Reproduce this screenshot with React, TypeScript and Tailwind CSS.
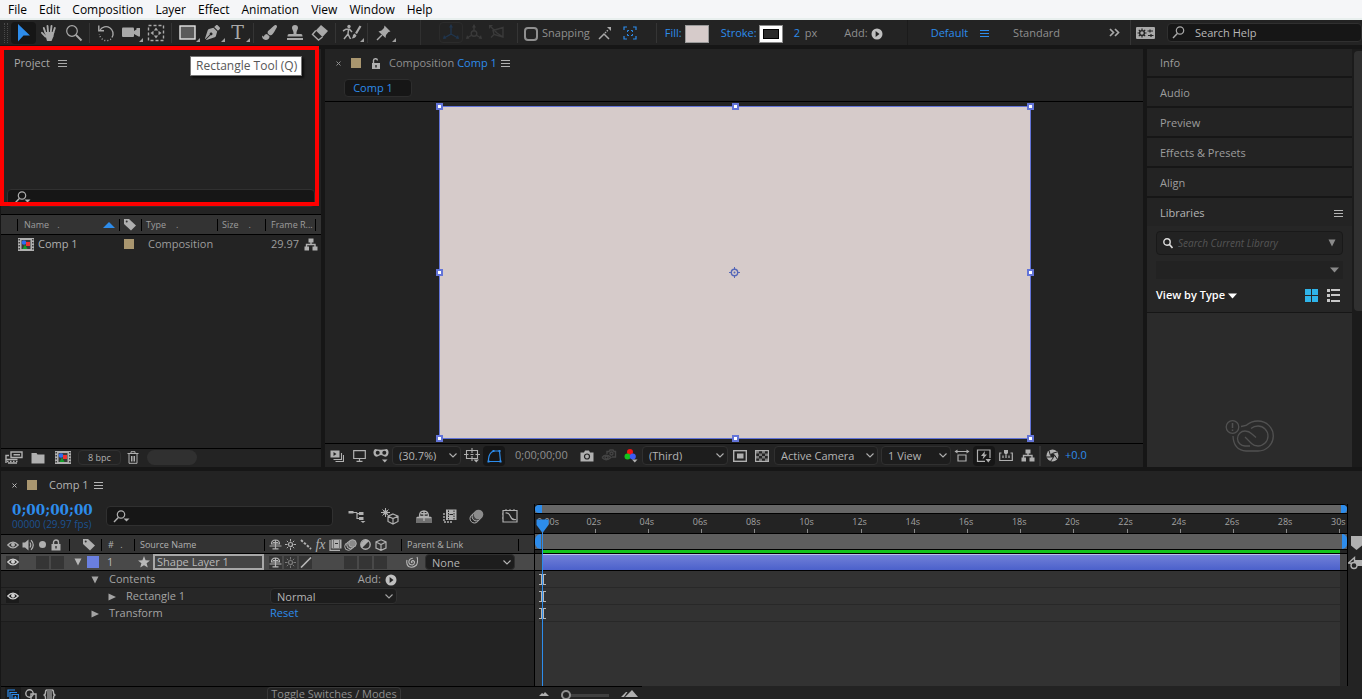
import { useState } from 'react';
import type { ReactNode } from 'react';
import { FaPaintBrush, FaPenNib } from 'react-icons/fa';

type IconProps = { w?: number; h?: number; className?: string; children: ReactNode };

// Small stroke/fill svg wrapper, everything inherits currentColor
function Icon({ w = 16, h = 16, className = '', children }: IconProps) {
  return (
    <svg
      width={w}
      height={h}
      viewBox={`0 0 ${w} ${h}`}
      className={`shrink-0 ${className}`}
      fill="none"
      stroke="currentColor"
      strokeWidth={1.4}
      aria-hidden="true"
    >
      {children}
    </svg>
  );
}

const solid = { fill: 'currentColor', stroke: 'none' };

/* ---------- toolbar icons ---------- */

const ArrowIcon = () => (
  <Icon w={18} h={20}><path {...solid} d="M3 1 15 12.500H8.500L3 18.500Z" /></Icon>
);
const HandIcon = () => (
  <Icon w={18} h={18}>
    <path d="M5.500 9 3.800 4M8 8 7.500 2M10.800 8 11.500 2M13.200 9 14.800 4M5.500 12.500 2 8.800" strokeWidth={1.900} strokeLinecap="round" />
    <path {...solid} d="M4.600 8H14.300L13.500 12.500 11.500 17H7Z" />
  </Icon>
);
const ZoomIcon = () => (
  <Icon w={18} h={18}><circle cx="7" cy="7" r="5.300" strokeWidth={1.200} /><path d="M11 11 16.500 16.500" strokeWidth={2} /></Icon>
);
const RotateIcon = () => (
  <Icon w={18} h={18}>
    <path d="M3 6A7 7 0 1 1 15 13.500" />
    <path d="M14 15A7 7 0 0 1 2.500 10" strokeDasharray="1 2" />
    <path d="M1.800 1.500V6.800H7" />
  </Icon>
);
const CameraIcon = () => (
  <Icon w={18} h={18}>
    <rect {...solid} x="0" y="3.500" width="12" height="9.500" rx="1" />
    <path {...solid} d="M12 7 14.500 5.500V4H18v8.500h-1.500L12 10Z" />
  </Icon>
);
const PanBehindIcon = () => (
  <Icon w={18} h={18}>
    <rect x="1.500" y="1.500" width="15" height="15" strokeDasharray="3 2" />
    <path {...solid} d="M9 3.500 11.200 6.500H6.800ZM9 14.500 11.200 11.500H6.800ZM3.500 9 6.500 6.800V11.200ZM14.500 9 11.500 6.800V11.200Z" />
  </Icon>
);
const RectToolIcon = () => (
  <Icon w={18} h={16}><rect x="1" y="1" width="15" height="13" fill="#5a5a5a" stroke="#e4e4e4" /></Icon>
);
const StampIcon = () => (
  <Icon w={18} h={18}>
    <path {...solid} d="M9 1a3 3 0 0 1 3 3c0 1.500-1.300 2.500-1.500 4.500V10H15q1.500 0 1.500 2V12.500H1.500V12Q1.500 10 3 10H7.500V8.500C7.300 6.500 6 5.500 6 4A3 3 0 0 1 9 1ZM1 14H17V16H1Z" />
  </Icon>
);
const EraserIcon = () => (
  <Icon w={18} h={18}>
    <path {...solid} d="M10 1 17 7 11.500 13 4.800 6.500Z" />
    <path d="M4.800 6.500 1.500 10.500 7.500 16 11.500 13" />
  </Icon>
);
const RotoIcon = () => (
  <Icon w={20} h={18}>
    <circle {...solid} cx="7" cy="2.500" r="1.700" />
    <path d="M1 7 4 5.200H7.500L10 8M6.500 5.500 6 10 8.500 15M6 10 2 15" strokeWidth={1.500} />
    <path d="M18.500 2 14 9.500" strokeWidth={2.200} />
    <path {...solid} d="M12.500 9.500 14.500 11.500Q13.500 14.500 9.500 14.500 11 13 11 11Z" />
  </Icon>
);
const PinIcon = () => (
  <Icon w={18} h={18}>
    <path {...solid} d="M9.500 1.500 15.500 7.500 13.500 8 11 11 10.500 14 3.500 7.500 6.500 6.500 9 4Z" />
    <path d="M7 11 2 16" />
  </Icon>
);
const AxisIcon = () => (
  <Icon w={18} h={18}>
    <path d="M9 2V10L2 14M9 10 16 14" />
    <path {...solid} d="M9 0 11 3.500H7ZM1 15 2 11 4.500 14.500ZM17 15 16 11 13.500 14.500Z" />
  </Icon>
);
const WorldAxisIcon = () => (
  <Icon w={18} h={18}>
    <path d="M9 2V7M2 14 7 11M11 11 16 14" />
    <circle cx="9" cy="9.500" r="2.800" />
    <path {...solid} d="M9 0 11 3.500H7ZM1 15 2 11 4.500 14.500ZM17 15 16 11 13.500 14.500Z" />
  </Icon>
);
const ViewAxisIcon = () => (
  <Icon w={18} h={18}>
    <path d="M3 3 9 9M5 6.500 15 3.500V13L6 10.500ZM6 10.500 3 13.500M9 9 15 13" />
    <path {...solid} d="M1 1H5L1 5Z" />
  </Icon>
);
const SnapLineIcon = () => (
  <Icon w={14} h={14}>
    <path d="M1 13 6 8 11 13" strokeWidth={1.500} />
    <path d="M7 7 10 4" strokeDasharray="1.500 1" />
    <path {...solid} d="M9 1H13V5Z" />
  </Icon>
);
const SnapBoxIcon = () => (
  <Icon w={14} h={14}>
    <path d="M1 4V1H4M10 1H13V4M13 10V13H10M4 13H1V10" strokeWidth={1.200} />
    <path d="M4.500 6V4.500H6M8 4.500H9.500V6M9.500 8V9.500H8M6 9.500H4.500V8" strokeWidth={1} />
  </Icon>
);
const CirclePlayIcon = () => (
  <Icon w={12} h={12}>
    <circle {...solid} cx="6" cy="6" r="5.500" />
    <path d="M4.600 3 8.500 6 4.600 9Z" fill="#232323" stroke="none" />
  </Icon>
);
const MenuLines = ({ className = '' }: { className?: string }) => (
  <Icon w={9} h={9} className={className}><path d="M0 1.500H9M0 4.500H9M0 7.500H9" strokeWidth={1} shapeRendering="crispEdges" /></Icon>
);
const WorkspaceIcon = () => (
  <Icon w={19} h={12}>
    <rect {...solid} width="19" height="12" rx="1" />
    <g stroke="#232323">
      <circle cx="6" cy="6" r="2.400" />
      <path d="M6 1.500V3M6 9V10.500M1.500 6H3M9 6H10.500M2.800 2.800 4 4M8 8 9.200 9.200M9.200 2.800 8 4M4 8 2.800 9.200" strokeWidth={1.200} />
      <path d="M11.500 4H17M14 2.500V5.500M12 8.500H17.500M15 7V10" strokeWidth={1.200} />
    </g>
  </Icon>
);
const GlassIcon = ({ arrow = false }: { arrow?: boolean }) => (
  <Icon w={17} h={13}>
    <circle cx="8" cy="4.500" r="3.700" strokeWidth={1.200} />
    <path d="M5.300 7.500 1 12" />
    {arrow && <path {...solid} d="M10.500 8.500H16.500L13.500 11.500Z" />}
  </Icon>
);

/* ---------- panel icons ---------- */

const CloseX = () => (
  <Icon w={7} h={7}><path d="M1.500 1.500 5.500 5.500M5.500 1.500 1.500 5.500" strokeWidth={1} /></Icon>
);
const UnlockIcon = () => (
  <Icon w={10} h={11}>
    <rect {...solid} x="1" y="5" width="8" height="6" />
    <path d="M2.500 5V3A2 2 0 0 1 6.500 2.500" />
    <path d="M5 7V9.500" stroke="#232323" />
  </Icon>
);
const TagIcon = () => (
  <Icon w={14} h={13}>
    <path {...solid} d="M1 1H6L13 7.500 8 12.500 1 6Z" />
    <circle cx="3.700" cy="3.500" r="1" fill="#333" stroke="none" />
  </Icon>
);
const CompIcon = () => (
  <Icon w={16} h={13}>
    <rect {...solid} width="16" height="13" />
    <path d="M1.200 1V13M14.800 1V13" stroke="#232323" strokeDasharray="1.500 1.500" strokeWidth={1.200} />
    <rect x="3.500" y="2" width="9" height="9" fill="#3a3a3a" stroke="none" />
    <circle cx="6" cy="4.500" r="2.300" fill="#2d6cf0" stroke="none" />
    <rect x="8" y="4" width="4" height="4" fill="#f03030" stroke="none" />
    <path d="M7 6.500 9.500 11H4.500Z" fill="#13a02a" stroke="none" />
  </Icon>
);
const FlowIcon = () => (
  <Icon w={14} h={13}>
    <path {...solid} d="M4.500 0.500H9.500V4.500H4.500ZM0.500 8.500H5V12.500H0.500ZM8.500 8.500H13.500V12.500H8.500Z" />
    <path d="M7 4V6.500M2.500 9V6.500H11V9" />
  </Icon>
);
const InterpretIcon = () => (
  <Icon w={18} h={13}>
    <path d="M6 1H17V6.500H6ZM8.500 3.800H15" />
    <path d="M4 4.500H1V12M1 8.500H12.500M3 12H12" />
    <path d="M2 10.500H12.500" strokeDasharray="1.500 1.500" />
  </Icon>
);
const FolderIcon = () => (
  <Icon w={14} h={12}><path {...solid} d="M0.500 1H5.500L6.500 2.500H13.500V11.500H0.500Z" /></Icon>
);
const TrashIcon = () => (
  <Icon w={12} h={13}><path d="M0.500 2.500H11.500M4 2V0.700H8V2M2 3V12.300H10V3M4.500 5V10.500M6 5V10.500M7.500 5V10.500" strokeWidth={1} /></Icon>
);
const FramesIcon = () => (
  <Icon w={14} h={12}>
    <path {...solid} d="M0.500 0.500H9.500V7.500H0.500Z" />
    <path d="M3.500 9.500H11.500V3M5.500 11.500H13.500V5" strokeWidth={1.100} />
    <path d="M3.500 2V6L6.500 4Z" fill="#232323" stroke="none" />
  </Icon>
);
const MonitorIcon = () => (
  <Icon w={13} h={12}><path d="M0.700 0.700H12.300V8.500H0.700ZM6.500 8.500V11M3.500 11.300H9.500" strokeWidth={1.200} /></Icon>
);
const MaskIcon = () => (
  <Icon w={16} h={15}>
    <path {...solid} d="M2 1Q8 2.500 14 1 16.500 3 15 7 13 10 9.500 7.500 8 6.500 6.500 7.500 3 10 1 7-0.500 3 2 1Z" />
    <circle cx="4.700" cy="4.800" r="2" fill="#232323" stroke="none" />
    <circle cx="11.300" cy="4.800" r="2" fill="#232323" stroke="none" />
    <path {...solid} d="M9 11.500H14.500L11.800 14.500Z" />
  </Icon>
);
const SafeZoneIcon = () => (
  <Icon w={16} h={15}>
    <path d="M2.500 2.500H13.500V10.500H2.500ZM8 0V5M8 8V13M0 6.500H4.500M11.500 6.500H16M6.500 6.500H9.500" strokeWidth={1.100} />
    <path {...solid} d="M9.500 11.500H15L12.300 14.500Z" />
  </Icon>
);
const MaskPathIcon = () => (
  <Icon w={15} h={14}>
    <path d="M1.500 12.500V10Q2 4 6.500 2H12.500L13.500 12.500Z" strokeWidth={1.200} />
    <path {...solid} d="M0.500 11.500H2.500V13.500H0.500ZM5.500 1H7.500V3H5.500ZM11.500 1H13.500V3H11.500ZM12.500 11.500H14.500V13.500H12.500Z" />
  </Icon>
);
const PhotoIcon = () => (
  <Icon w={14} h={12}>
    <path {...solid} d="M0.500 2.500H4L5 0.500H9L10 2.500H13.500V11.500H0.500Z" />
    <circle cx="7" cy="6.500" r="2.500" stroke="#232323" strokeWidth={1.200} />
  </Icon>
);
const ShowSnapIcon = () => (
  <Icon w={16} h={14}>
    <path d="M1 8.500Q5 4 10 8.500 5 13 1 8.500M6 5V2.500H8L9 1H12L13 2.500H14.500V8H11" />
    <circle cx="5.500" cy="8.500" r="1.500" /><circle cx="10.500" cy="4.500" r="1.500" />
  </Icon>
);
const ChannelsIcon = () => (
  <Icon w={16} h={16}>
    <circle cx="7" cy="4" r="3" fill="#f01515" stroke="none" />
    <circle cx="4.500" cy="8.500" r="3" fill="#14c21c" stroke="none" />
    <circle cx="9.800" cy="8.500" r="3" fill="#3c5cf5" stroke="none" />
    <path {...solid} d="M9 11.500H14.500L11.800 14.500Z" />
  </Icon>
);
const RegionIcon = () => (
  <Icon w={14} h={12}><rect x="0.700" y="0.700" width="12.600" height="10.600" /><rect {...solid} x="4" y="3.500" width="6.500" height="5" /></Icon>
);
const CheckerIcon = () => (
  <Icon w={14} h={12}>
    <rect x="0.600" y="0.600" width="12.800" height="10.800" strokeWidth={1.200} />
    <path {...solid} d="M1 1h3v2.500h-3ZM7 1h3v2.500h-3ZM4 3.500h3v2.500h-3ZM10 3.500h3v2.500h-3ZM1 6h3v2.500h-3ZM7 6h3v2.500h-3ZM4 8.500h3v2.500h-3ZM10 8.500h3v2.500h-3Z" opacity={0.6} />
  </Icon>
);
const PixelAspectIcon = () => (
  <Icon w={16} h={13}>
    <path d="M4 6H12V12H4ZM1.500 2.500H14.500" strokeWidth={1.200} />
    <path {...solid} d="M0.500 2.500 3.500 0.500V4.500ZM15.500 2.500 12.500 0.500V4.500Z" />
  </Icon>
);
const FastPreviewIcon = () => (
  <Icon w={16} h={14}>
    <path d="M9 12.300H1.500V1H14V9" strokeWidth={1.200} />
    <path {...solid} d="M9 2 5 7H7.500L6.500 10.500 11 5.500H8.500ZM9.500 10H15L12.300 13.500Z" />
  </Icon>
);
const TimelineIcon = () => (
  <Icon w={14} h={12}>
    <path d="M2.500 3H0.700V10.500H13.300V3H11.500M4 5.500V8M7 5V8M10 5.500V8" strokeWidth={1.200} />
    <path {...solid} d="M5 0H9V3L7 5 5 3Z" />
  </Icon>
);
const ApertureIcon = () => (
  <Icon w={13} h={13}>
    <circle {...solid} cx="6.500" cy="6.500" r="6" />
    <circle cx="6.500" cy="6.500" r="2.200" fill="#232323" stroke="none" />
    <path d="M6.500 4.300 11 3M8.500 6 11.500 10.500M7.500 8.500 4.500 12.300M4.800 8 0.800 8M4.300 6 3 1.500" stroke="#232323" strokeWidth={1} />
  </Icon>
);
const CloudIcon = () => (
  <Icon w={50} h={34} className="text-[#515151]">
    <circle cx="7.500" cy="8" r="6.300" strokeWidth={1.300} />
    <path d="M7.500 4V9M7.500 10.500V12" strokeWidth={1.500} />
    <path d="M16 7.500 21 6.500Q26 2 33 2A15.300 15 0 0 1 33 32H21Q8.500 31 8 17" strokeWidth={1.300} />
    <path d="M26 9.500Q29 7 33 7A10 10 0 0 1 33 27Q29 27 26.500 24.500L20 18M31 18.500 27 15Q24 12 20 12A7.500 7.500 0 0 0 20 27H25" strokeWidth={1.300} />
  </Icon>
);

/* ---------- timeline icons ---------- */

const EyeIcon = () => (
  <Icon w={12} h={10}>
    <path d="M0.800 5Q6-0.800 11.200 5 6 10.800 0.800 5Z" strokeWidth={1.300} />
    <circle {...solid} cx="6" cy="4.800" r="2" />
  </Icon>
);
const SpeakerIcon = () => (
  <Icon w={13} h={12}>
    <path {...solid} d="M0.500 3.500H3L6.500 0.500V11.500L3 8.500H0.500Z" />
    <path d="M8 3.500Q9.500 6 8 8.500M9 1.200Q13.500 6 9 10.800" strokeWidth={1.200} />
  </Icon>
);
const LockIcon = () => (
  <Icon w={10} h={12}>
    <rect {...solid} x="0.500" y="5" width="9" height="6.500" />
    <path d="M2.500 5V3.500A2.500 2.500 0 0 1 7.500 3.500V5" />
    <path d="M5 7V9.500" stroke="#333" />
  </Icon>
);
const ShyIcon = () => (
  <Icon w={13} h={11}>
    <path d="M2.500 5Q2.500 1 6.500 1T10.500 5ZM0.500 7H12.500M6.500 1V10M3.500 9.800H9.500M4 3.500H9" strokeWidth={1.200} />
  </Icon>
);
const SunIcon = ({ dim = false }: { dim?: boolean }) => (
  <Icon w={11} h={11} className={dim ? 'text-[#7a7a7a]' : ''}>
    <circle cx="5.500" cy="5.500" r="2" strokeWidth={1.200} />
    <path d="M5.500 0V2.500M5.500 8.500V11M0 5.500H2.500M8.500 5.500H11M1.800 1.800 3.300 3.300M7.700 7.700 9.200 9.200M9.200 1.800 7.700 3.300M3.300 7.700 1.800 9.200" strokeWidth={1} />
  </Icon>
);
const DottedSlash = () => (
  <Icon w={12} h={11}><path d="M1 1 11 10" strokeDasharray="2.500 1.500" strokeWidth={2} /></Icon>
);
const SlashIcon = () => (
  <Icon w={12} h={11}><path d="M1 10.500 11 0.500" strokeWidth={1.600} /></Icon>
);
const FilmIcon = () => (
  <Icon w={13} h={12}>
    <path d="M1 1V11.300H11" strokeWidth={1.200} />
    <rect {...solid} x="2.500" y="0.500" width="10" height="9" />
    <path d="M4.500 1.500V9M10.500 1.500V9" stroke="#333" strokeWidth={1} strokeDasharray="1 1" />
    <path d="M6 4.500H9" stroke="#333" strokeWidth={1} />
  </Icon>
);
const BlurIcon = () => (
  <Icon w={13} h={12}>
    <circle cx="4.500" cy="7.500" r="3.800" strokeWidth={1} />
    <circle cx="6.500" cy="6" r="3.800" fill="#555" strokeWidth={1} />
    <circle cx="8.500" cy="4.500" r="3.800" fill="#8a8a8a" strokeWidth={1} />
  </Icon>
);
const AdjustIcon = () => (
  <Icon w={11} h={11}><circle cx="5.500" cy="5.500" r="4.700" /><path {...solid} d="M9 2A5 5 0 0 0 2 9Z" /></Icon>
);
const CubeIcon = () => (
  <Icon w={12} h={12}><path d="M6 0.800 11 3V9L6 11.300 1 9V3ZM1 3 6 5.500 11 3M6 5.500V11.300" strokeWidth={1.200} /></Icon>
);
const SpiralIcon = () => (
  <Icon w={12} h={12}><path d="M6.500 6.500Q5 7 5.500 5.300 7 3.800 8.300 5.500 9 8 6.500 9 3 9 2.800 6 3 2.500 6.800 2.200M11 1Q12.500 5 10.500 9 7 12.500 2.500 10.500 0 8 1 4" strokeWidth={1.100} /></Icon>
);
const StarIcon = () => (
  <Icon w={12} h={12}><path {...solid} d="M6 0 7.600 4.200 12 4.500 8.600 7.300 9.800 11.500 6 9.200 2.200 11.500 3.400 7.300 0 4.500 4.400 4.200Z" /></Icon>
);
const FlowchartIcon = () => (
  <Icon w={18} h={14}>
    <path d="M2 3.500H9M9 3.500V9.500H13M9 4.700H13" strokeWidth={1.200} />
    <path {...solid} d="M0.500 2H5.500V4.500H0.500ZM11 3H15.500V6H11ZM11 8H15.500V11H11ZM12.500 12H17.500L15 14Z" />
  </Icon>
);
const DraftIcon = () => (
  <Icon w={18} h={17}>
    <path d="M12 6 17 8.200V13.500L12 16 7 13.500V8.200ZM7 8.200 12 10.500 17 8.200M12 10.500V16" strokeWidth={1.200} />
    <circle {...solid} cx="4.500" cy="4.500" r="2.300" />
    <path d="M4.500 0V9M0 4.500H9M1.500 1.500 7.500 7.500M7.500 1.500 1.500 7.500" strokeWidth={1} />
  </Icon>
);
const HideShyIcon = () => (
  <Icon w={16} h={13}>
    <rect x="0" y="7" width="16" height="6" fill="#707070" stroke="none" />
    <path d="M3.500 6.500Q3.500 1 8 1T12.500 6.500ZM1 7.500H15M8 1V11M5 3.800H11" />
  </Icon>
);
const FrameBlendIcon = () => (
  <Icon w={14} h={14}>
    <path d="M1 4V13H9" strokeDasharray="2 1" />
    <rect {...solid} x="3" y="0.500" width="10.500" height="10.500" />
    <path d="M5.500 1.500V10.500M11 1.500V10.500" stroke="#232323" strokeWidth={1} strokeDasharray="1.500 1" />
    <path d="M6.500 5.500H10" stroke="#232323" strokeWidth={1} />
  </Icon>
);
const MotionBlurIcon = () => (
  <Icon w={15} h={15}>
    <circle cx="5.500" cy="9.500" r="4.500" strokeWidth={1} />
    <circle cx="7.500" cy="7.500" r="4.500" fill="#444" strokeWidth={1} />
    <circle cx="9.500" cy="5.500" r="4.800" fill="#8c8c8c" stroke="none" />
  </Icon>
);
const GraphIcon = () => (
  <Icon w={16} h={14}>
    <path d="M1 1.500H15V13H1ZM3.500 4Q7 3.500 8.500 7.500T14 10.500" strokeWidth={1.200} />
    <path d="M4 0V1M8 0V1M12 0V1M0 5H1M0 9H1" strokeWidth={1} />
  </Icon>
);
const IBeam = () => (
  <Icon w={7} h={11}><path d="M0 0.500H7M0 10.500H7" strokeWidth={1} /><path d="M3.500 1V10" strokeWidth={3} /></Icon>
);
const Chevron = () => (
  <Icon w={8} h={5}><path d="M0.500 0.500 4 4 7.500 0.500" strokeWidth={1.100} /></Icon>
);
const TriDown = () => (
  <Icon w={8} h={8}><path {...solid} d="M0.500 0.500H7.500L4 7.500Z" /></Icon>
);
const TriRight = () => (
  <Icon w={8} h={8}><path {...solid} d="M0.500 0.500 8 4 0.500 7.500Z" /></Icon>
);
const WideTri = () => (
  <Icon w={9} h={6}><path {...solid} d="M0 0.500H9L4.500 5.500Z" /></Icon>
);

/* ---------- building blocks ---------- */

function Tool({ label, active, more, children }: { label: string; active?: boolean; more?: boolean; children: ReactNode }) {
  return (
    <button
      aria-label={label}
      className={`relative flex h-[22px] w-[25px] items-center justify-center rounded-sm ${active ? 'bg-[#161616]' : ''}`}
    >
      {children}
      {more && (
        <svg width="4" height="4" className="absolute right-0 bottom-0.5 fill-[#a0a0a0]"><path d="M4 0V4H0Z" /></svg>
      )}
    </button>
  );
}

const Divider = () => <div className="mx-[3px] h-5 w-px shrink-0 bg-[#353535]" />;

function Dropdown({ label, value, className = '' }: { label: string; value: string; className?: string }) {
  return (
    <div className={`relative shrink-0 ${className}`}>
      <select aria-label={label} className="block h-full w-full appearance-none rounded-sm border border-[#303030] bg-[#1d1d1d] pl-1.5 text-[11px] leading-none text-[#b4b4b4]">
        <option>{value}</option>
      </select>
      <span className="pointer-events-none absolute inset-y-0 right-1 flex items-center"><Chevron /></span>
    </div>
  );
}

const Slot = ({ label, children, className = '' }: { label: string; children: ReactNode; className?: string }) => (
  <button aria-label={label} className={`flex h-5 w-[22px] shrink-0 items-center justify-center ${className}`}>{children}</button>
);

const menus = ['File', 'Edit', 'Composition', 'Layer', 'Effect', 'Animation', 'View', 'Window', 'Help'];

function MenuBar() {
  return (
    <nav className="flex h-5 shrink-0 gap-3 border-b-2 border-[#e8efee] bg-[#f5f6f8] pl-2 text-[12px] text-black">
      {menus.map((m) => (
        <button key={m} className="leading-[19px]">{m}</button>
      ))}
    </nav>
  );
}

function Toolbar() {
  const [snap, setSnap] = useState(false);
  return (
    <header className="flex h-[25px] shrink-0 items-center bg-[#232323] pl-1 text-[#a9a9a9]">
      <div className="mr-[3px] h-5 w-1 border-x border-dotted border-[#4a4a4a]" />
      <Tool label="Selection Tool" active><span className="text-[#2d8ceb]"><ArrowIcon /></span></Tool>
      <Tool label="Hand Tool"><HandIcon /></Tool>
      <Tool label="Zoom Tool"><ZoomIcon /></Tool>
      <Divider />
      <Tool label="Rotation Tool"><RotateIcon /></Tool>
      <Tool label="Camera Tool" more><CameraIcon /></Tool>
      <Tool label="Pan Behind Tool"><PanBehindIcon /></Tool>
      <Divider />
      <Tool label="Rectangle Tool" more><RectToolIcon /></Tool>
      <Tool label="Pen Tool" more><FaPenNib size={15} /></Tool>
      <Tool label="Type Tool" more><span className="font-['DejaVu_Serif'] text-[19px] leading-none">T</span></Tool>
      <Divider />
      <Tool label="Brush Tool"><FaPaintBrush size={15} /></Tool>
      <Tool label="Clone Stamp Tool"><StampIcon /></Tool>
      <Tool label="Eraser Tool"><EraserIcon /></Tool>
      <Divider />
      <Tool label="Roto Brush Tool" more><RotoIcon /></Tool>
      <Divider />
      <Tool label="Puppet Pin Tool" more><PinIcon /></Tool>
      <div className="mr-[18px] ml-6 h-full w-px bg-[#303030]" />
      <div className="flex items-center text-[#3a3a3a]">
        <button aria-label="Local Axis" className="flex h-[21px] w-6 items-center justify-center rounded-sm border border-[#2b2b2b] text-[#20354d]"><AxisIcon /></button>
        <button aria-label="World Axis" className="flex w-[22px] justify-center"><WorldAxisIcon /></button>
        <button aria-label="View Axis" className="flex w-6 justify-center"><ViewAxisIcon /></button>
      </div>
      <div className="mr-1.5 ml-2 h-5 w-px bg-[#353535]" />
      <label className="flex items-center gap-1 pt-0.5 text-[11px] text-[#8f8f8f]">
        <input
          type="checkbox"
          checked={snap}
          onChange={() => setSnap(!snap)}
          className="h-3.5 w-3.5 appearance-none rounded-sm border-2 border-[#8f8f8f] checked:bg-[#2d8ceb]"
        />
        Snapping
      </label>
      <button aria-label="Snap edges" className="ml-2"><SnapLineIcon /></button>
      <button aria-label="Snap features" className="ml-[11px] text-[#2d8ceb]"><SnapBoxIcon /></button>
      <div className="mr-2 ml-[19px] h-5 w-px bg-[#353535]" />
      <div className="flex items-center pt-0.5 text-[11px]">
        <a href="#fill" className="text-[#2d8ceb]">Fill:</a>
        <button aria-label="Fill color" className="ml-[3px] h-[18px] w-6 border border-[#9a9a9a] bg-[#d6cbca]" />
        <a href="#stroke" className="ml-3 text-[#2d8ceb]">Stroke:</a>
        <button aria-label="Stroke color" className="ml-0.5 flex h-[18px] w-6 items-center justify-center border border-[#8a8a8a] bg-white">
          <span className="h-2.5 w-4 border border-black bg-[#2a2a2a]" />
        </button>
        <span className="ml-[11px]"><a href="#width" className="text-[#2d8ceb]">2</a> <span className="ml-0.5 text-[#8f8f8f]">px</span></span>
        <span className="ml-[27px] text-[#8f8f8f]">Add:</span>
        <button aria-label="Add" className="ml-[3px] text-[#c0c0c0]"><CirclePlayIcon /></button>
      </div>
      <div className="flex-1" />
      <div className="mr-[23px] h-full w-px bg-[#1b1b1b]" />
      <button className="pt-0.5 text-[11px] text-[#2d8ceb]">Default</button>
      <button aria-label="Workspace menu" className="ml-3 pt-0.5 text-[#2d8ceb]"><MenuLines /></button>
      <button className="ml-6 pt-0.5 text-[11px] text-[#8f8f8f]">Standard</button>
      <button aria-label="More workspaces" className="ml-[49px]">
        <Icon w={11} h={9}><path d="M1 1 4.500 4.500 1 8M6 1 9.500 4.500 6 8" strokeWidth={1.700} /></Icon>
      </button>
      <div className="mr-[5px] ml-2.5 h-full w-px bg-[#353535]" />
      <button aria-label="Workspace settings"><WorkspaceIcon /></button>
      <label className="ml-3 flex h-[19px] w-[195px] items-center gap-1.5 rounded-sm border border-[#303030] bg-[#161616] pl-1">
        <GlassIcon />
        <input placeholder="Search Help" className="w-32 bg-transparent pt-0.5 text-[11px] outline-none placeholder:text-[#b8b8b8]" />
      </label>
    </header>
  );
}

function ProjectPanel() {
  return (
    <section className="flex w-80 shrink-0 flex-col bg-[#232323]">
      <div className="flex h-7 items-center gap-2 pl-[13px] text-[11px] text-[#a9a9a9]">
        Project <MenuLines />
      </div>
      <div className="h-28" />
      <label className="mx-1.5 flex h-[18px] items-center rounded-sm border border-[#303030] bg-[#161616] pb-0.5 pl-1.5 text-[#b0b0b0]">
        <GlassIcon arrow />
        <input aria-label="Search project" className="h-3 min-w-0 flex-1 bg-transparent text-[11px] outline-none" />
      </label>
      <table className="mt-[7px] w-full table-fixed text-left text-[11px] text-[#9d9d9d]">
        <colgroup>
          <col className="w-4" />
          <col className="w-[102px]" />
          <col className="w-[22px]" />
          <col className="w-[76px]" />
          <col className="w-12" />
          <col />
        </colgroup>
        <thead className="border-y border-black bg-[#333] text-[9px]">
          <tr className="h-5 [&>th]:font-normal">
            <th />
            <th>
              <div className="flex h-3 items-center border-l border-black pl-1.5">
                Name<span className="ml-2">.</span>
                <Icon w={12} h={6} className="mr-1 ml-auto text-[#2d8ceb]"><path {...solid} d="M0 6 6 0 12 6Z" /></Icon>
              </div>
            </th>
            <th><div className="flex h-3 items-center border-l border-black pl-[3px] text-[#b0b0b0]"><TagIcon /></div></th>
            <th><div className="flex h-3 items-center border-l border-black pl-1">Type<span className="ml-2.5">.</span></div></th>
            <th><div className="flex h-3 items-center border-l border-black pl-1">Size<span className="ml-2.5">.</span></div></th>
            <th><div className="mr-[5px] flex h-3 items-center border-x border-black pl-[5px] whitespace-nowrap">Frame R...</div></th>
          </tr>
        </thead>
        <tbody>
          <tr className="h-[19px]">
            <td />
            <td><div className="flex items-center gap-1 pl-px text-[#b0b0b0]"><CompIcon />Comp 1</div></td>
            <td><div className="ml-[5px] h-2.5 w-2.5 bg-[#a9966f]" /></td>
            <td className="pl-[7px]">Composition</td>
            <td />
            <td><div className="flex items-center justify-between pr-[3px] pl-1.5">29.97<span className="text-[#b0b0b0]"><FlowIcon /></span></div></td>
          </tr>
        </tbody>
      </table>
      <div className="mt-auto flex h-[19px] items-center border-t border-black pb-px pl-1 text-[#b0b0b0]">
        <button aria-label="Interpret footage"><InterpretIcon /></button>
        <button aria-label="New folder" className="ml-2"><FolderIcon /></button>
        <button aria-label="New composition" className="ml-2.5"><CompIcon /></button>
        <button className="ml-[7px] h-[15px] w-[43px] rounded-sm border border-[#303030] text-[9px] leading-none">8 bpc</button>
        <button aria-label="Delete" className="ml-1.5"><TrashIcon /></button>
        <div className="ml-2 h-[15px] w-[50px] rounded-full bg-[#303030]" />
      </div>
    </section>
  );
}

const handles = [
  '-top-1 -left-1',
  '-top-1 left-1/2 -ml-[3px]',
  '-top-1 -right-1',
  'top-1/2 -left-1 -mt-1',
  'top-1/2 -right-1 -mt-1',
  '-bottom-1 -left-1',
  '-bottom-1 left-1/2 -ml-[3px]',
  '-right-1 -bottom-1',
];

function Viewer() {
  return (
    <section className="flex min-w-0 flex-1 flex-col bg-[#232323]">
      <div className="flex h-7 items-center pl-2.5 text-[11px] text-[#8f8f8f]">
        <button aria-label="Close"><CloseX /></button>
        <div className="ml-[9px] h-2.5 w-2.5 bg-[#a9966f]" />
        <span className="ml-2.5 text-[#b0b0b0]"><UnlockIcon /></span>
        <span className="ml-2">Composition</span>
        <span className="ml-[3px] text-[#2d8ceb]">Comp 1</span>
        <MenuLines className="ml-1 text-[#b0b0b0]" />
      </div>
      <div className="flex h-[25px] items-start border-b border-black pt-0.5 pl-[19px]">
        <button className="h-[18px] w-[68px] rounded-sm border border-[#2d2d2d] bg-[#161616] pr-2.5 pb-px text-[11px] leading-none text-[#2d8ceb]">Comp 1</button>
      </div>
      <div className="flex min-h-0 flex-1 justify-center py-1 pl-px">
        <div className="relative aspect-video h-full border border-[#6374d8] bg-[#d6cbca]">
          {handles.map((pos) => (
            <span key={pos} className={`absolute h-[7px] w-[7px] border-2 border-[#6374d8] bg-white ${pos}`} />
          ))}
          <div className="flex h-full items-center justify-center text-[#5668b8]">
            <Icon w={11} h={11}><circle cx="5.500" cy="5.500" r="3.200" /><circle {...solid} cx="5.500" cy="5.500" r="1" /><path d="M5.500 0V2.500M5.500 8.500V11M0 5.500H2.500M8.500 5.500H11" strokeWidth={1} /></Icon>
          </div>
        </div>
      </div>
      <div className="flex h-6 shrink-0 items-center border-t border-black pl-px text-[11px] text-[#b0b0b0]">
        <Slot label="Always preview"><FramesIcon /></Slot>
        <Slot label="Primary viewer"><MonitorIcon /></Slot>
        <Slot label="VR view"><MaskIcon /></Slot>
        <Dropdown label="Magnification" value="(30.7%)" className="h-[19px] w-[69px]" />
        <Slot label="Grid and guides"><SafeZoneIcon /></Slot>
        <Slot label="Mask visibility" className="rounded-sm bg-[#161616] text-[#2d8ceb]"><MaskPathIcon /></Slot>
        <button className="w-[71px] shrink-0 pl-2.5 text-left text-[#8f8f8f]">0;00;00;00</button>
        <Slot label="Take snapshot"><PhotoIcon /></Slot>
        <Slot label="Show snapshot" className="text-[#444]"><ShowSnapIcon /></Slot>
        <Slot label="Channels"><ChannelsIcon /></Slot>
        <Dropdown label="Resolution" value="(Third)" className="h-[19px] w-[86px]" />
        <Slot label="Region of interest" className="ml-px"><RegionIcon /></Slot>
        <Slot label="Transparency grid"><CheckerIcon /></Slot>
        <Dropdown label="3D view" value="Active Camera" className="ml-px h-[19px] w-[104px]" />
        <Dropdown label="View layout" value="1 View" className="ml-[3px] h-[19px] w-[70px]" />
        <Slot label="Pixel aspect"><PixelAspectIcon /></Slot>
        <Slot label="Fast previews" className="rounded-sm bg-[#161616]"><FastPreviewIcon /></Slot>
        <Slot label="Timeline"><TimelineIcon /></Slot>
        <Slot label="Flowchart"><FlowIcon /></Slot>
        <div className="h-5 w-0.5 bg-[#333]" />
        <Slot label="Reset exposure"><ApertureIcon /></Slot>
        <button className="ml-0.5 text-[#2d8ceb]">+0.0</button>
      </div>
    </section>
  );
}

const sidePanels = ['Info', 'Audio', 'Preview', 'Effects & Presets', 'Align'];

function SideColumn() {
  return (
    <aside className="flex w-[215px] shrink-0 bg-[#1b1b1b]">
      <div className="mr-0.5 flex w-[205px] flex-col bg-[#262626] text-[11px] text-[#9d9d9d]">
        {sidePanels.map((name, i) => (
          <button
            key={name}
            className={`border-b-2 border-[#161616] bg-[#232323] pt-0.5 pl-[13px] text-left ${i === 0 ? 'h-[29px]' : 'h-[30px]'}`}
          >
            {name}
          </button>
        ))}
        <div className="flex h-7 items-center justify-between bg-[#232323] pt-0.5 pr-[9px] pl-[13px] text-[#b4b4b4]">
          Libraries <MenuLines />
        </div>
        <label className="mx-[9px] mt-[5px] flex h-6 items-center rounded-sm border border-[#191919] bg-[#222] px-1.5 text-[#8a8a8a]">
          <Icon w={10} h={11} className="text-[#dcdcdc]"><circle cx="4" cy="4" r="3.200" /><path d="M6.500 6.500 9.500 10" strokeWidth={1.700} /></Icon>
          <input placeholder="Search Current Library" className="min-w-0 flex-1 bg-transparent pl-[5px] text-[10px] italic outline-none placeholder:text-[#555]" />
          <TriDown />
        </label>
        <button aria-label="Choose library" className="mx-[9px] mt-1.5 flex h-[18px] items-center justify-end bg-[#222] pr-1 text-[#8a8a8a]"><WideTri /></button>
        <div className="flex h-[34px] items-center border-b border-[#161616] pr-3 pl-[9px] text-white">
          <button className="flex items-center gap-[3px] font-semibold">View by Type <WideTri /></button>
          <button aria-label="Grid view" className="ml-auto text-[#2fb4e9]">
            <Icon w={13} h={13}><path {...solid} d="M0 0H6V6H0ZM7 0H13V6H7ZM0 7H6V13H0ZM7 7H13V13H7Z" /></Icon>
          </button>
          <button aria-label="List view" className="ml-[9px] text-[#c8c8c8]">
            <Icon w={13} h={13}><path {...solid} d="M0 0H3V3H0ZM0 5H3V8H0ZM0 10H3V13H0ZM4 0H13V2H4ZM4 5H13V7H4ZM4 11H13V13H4Z" /></Icon>
          </button>
        </div>
        <div className="flex flex-1 items-end justify-center bg-[#2b2b2b] pb-[14px]"><CloudIcon /></div>
      </div>
      <div className="mt-0.5 h-[260px] flex-1 rounded-l bg-[#303030]" />
    </aside>
  );
}

const Sep = () => <div className="h-3 w-px shrink-0 bg-black" />;
const Cell = ({ children, className = 'bg-[#353535]' }: { children?: ReactNode; className?: string }) => (
  <div className={`flex h-[13px] w-[13px] shrink-0 items-center justify-center ${className}`}>{children}</div>
);

function LayerColumn() {
  return (
    <div className="flex w-[533px] shrink-0 flex-col text-[11px] text-[#a4a4a4]">
      <div className="flex h-[35px] shrink-0 items-center pb-px">
        <div className="w-[105px] pl-[11px]">
          <div className="font-['DejaVu_Serif_Condensed','DejaVu_Serif',serif] text-[15px] leading-4 font-bold text-[#2d8ceb]">0;00;00;00</div>
          <div className="text-[10px] leading-3 whitespace-nowrap text-[#1c5291]">00000 (29.97 fps)</div>
        </div>
        <label className="flex h-5 w-[227px] items-center rounded-sm border border-[#303030] bg-[#161616] pl-1.5 text-[#b0b0b0]">
          <GlassIcon arrow />
          <input aria-label="Search layers" className="min-w-0 flex-1 bg-transparent outline-none" />
        </label>
        <div className="flex flex-1 items-center pl-[15px] text-[#b0b0b0]">
          <button aria-label="Mini flowchart"><FlowchartIcon /></button>
          <button aria-label="Draft 3D" className="ml-[15px]"><DraftIcon /></button>
          <button aria-label="Hide shy layers" className="ml-[17px]"><HideShyIcon /></button>
          <button aria-label="Frame blending" className="ml-[11px]"><FrameBlendIcon /></button>
          <button aria-label="Motion blur" className="ml-3"><MotionBlurIcon /></button>
          <button aria-label="Graph editor" className="ml-[18px]"><GraphIcon /></button>
        </div>
      </div>

      <div className="flex h-5 shrink-0 items-center border-y border-black bg-[#333] pt-px pl-1.5 text-[9px] text-[#b0b0b0]">
        <div className="flex w-[62px] shrink-0 items-center gap-[3px]">
          <EyeIcon /><SpeakerIcon />
          <div className="mx-px h-[7px] w-[7px] rounded-full bg-[#b0b0b0]" />
          <div className="ml-px"><LockIcon /></div>
        </div>
        <Sep />
        <div className="ml-3 w-[19px]"><TagIcon /></div>
        <Sep />
        <span className="w-8 pl-1.5"># <span className="pl-1">.</span></span>
        <Sep />
        <span className="w-[129px] pl-[5px]">Source Name</span>
        <Sep />
        <div className="flex w-[136px] items-center pl-[3px] [&>*]:w-[15px] [&>*]:text-center">
          <div className="flex justify-center"><ShyIcon /></div>
          <div className="flex justify-center"><SunIcon /></div>
          <div className="flex justify-center"><DottedSlash /></div>
          <div className="font-['Liberation_Serif'] text-[14px] leading-none italic">fx</div>
          <div className="flex justify-center"><FilmIcon /></div>
          <div className="flex justify-center"><BlurIcon /></div>
          <div className="flex justify-center"><AdjustIcon /></div>
          <div className="flex justify-center"><CubeIcon /></div>
        </div>
        <Sep />
        <span className="w-[116px] pl-[5px]">Parent &amp; Link</span>
        <Sep />
      </div>

      <div className="flex h-[17px] shrink-0 items-center border-b border-black bg-[#494949] pl-[5px] text-[#b8b8b8]">
        <Cell className="bg-[#353535] text-[#d0d0d0]"><EyeIcon /></Cell>
        <div className="ml-[17px] flex gap-0.5"><Cell /><Cell /></div>
        <button aria-label="Collapse layer" className="ml-2.5"><TriDown /></button>
        <div className="ml-[5px] h-3 w-3 bg-[#6a7fe0]" />
        <span className="ml-2">1</span>
        <div className="ml-auto flex items-center">
          <StarIcon />
          <input
            aria-label="Layer name"
            defaultValue="Shape Layer 1"
            className="ml-[3px] h-4 w-[111px] border-2 border-[#a8a8a8] bg-[#454545] pl-0.5 outline-none"
          />
        </div>
        <div className="ml-[5px] flex w-[118px] shrink-0 gap-0.5">
          <Cell><ShyIcon /></Cell>
          <Cell><SunIcon dim /></Cell>
          <Cell><SlashIcon /></Cell>
          <div className="w-7" />
          <Cell /><Cell /><Cell />
        </div>
        <div className="ml-[19px]"><SpiralIcon /></div>
        <Dropdown label="Parent" value="None" className="mr-[19px] ml-[7px] h-4 w-[90px]" />
      </div>

      <div className="flex h-[17px] shrink-0 items-center border-b border-[#1c1c1c] bg-[#272727]">
        <button className="flex items-center gap-2.5 pt-px pl-[90px]"><TriDown />Contents</button>
        <button className="mr-[137px] ml-auto flex items-center gap-1 pt-px">Add: <span className="text-[#c0c0c0]"><CirclePlayIcon /></span></button>
      </div>
      <div className="flex h-[17px] shrink-0 items-center border-b border-[#1c1c1c] bg-[#272727] pl-[5px]">
        <Cell className="bg-[#1b1b1b] text-[#d0d0d0]"><EyeIcon /></Cell>
        <button className="flex items-center gap-2.5 pt-px pl-[89px]"><TriRight />Rectangle 1</button>
        <Dropdown label="Blend mode" value="Normal" className="mr-[137px] ml-auto h-4 w-[127px]" />
      </div>
      <div className="flex h-[17px] shrink-0 items-center border-b border-[#1c1c1c] bg-[#272727]">
        <button className="flex w-[269px] items-center gap-2.5 pt-px pl-[90px]"><TriRight />Transform</button>
        <button className="text-[#2d8ceb]">Reset</button>
      </div>
    </div>
  );
}

const seconds = Array.from({ length: 16 }, (_, i) => i * 2);

function TimeRuler() {
  return (
    <div className="flex min-w-0 flex-1 pt-[5px]">
      <div className="relative flex min-w-0 flex-1 flex-col border-x border-black">
        <div className="flex h-2.5 shrink-0 justify-between rounded-t border-y border-black bg-[#666]">
          <div className="w-[7px] rounded-l-full bg-[#2d8ceb]" />
          <div className="w-1.5 rounded-r-full bg-[#2d8ceb]" />
        </div>
        <div className="flex h-5 shrink-0 justify-between border-b border-black px-[7px] pt-px text-[9px] text-[#a4a4a4]">
          {seconds.map((s) => (
            <div key={s} className="flex w-0 flex-col items-center justify-between whitespace-nowrap">
              {/* first label is pushed right so it stays inside the ruler */}
              <span className={`leading-[14px] ${s === 0 ? 'pl-3' : 'pr-[3px]'}`}>{s === 0 ? '0:00s' : `${String(s).padStart(2, '0')}s`}</span>
              <span className="h-1 w-px bg-[#8a8a8a]" />
            </div>
          ))}
        </div>
        <div className="flex h-4 shrink-0 justify-between border-b border-black bg-[#5e5e5e]">
          <div className="w-1.5 rounded-l-full bg-[#2d8ceb]" />
          <div className="w-[5px] rounded-r-full bg-[#2d8ceb]" />
        </div>
        <div className="h-1 shrink-0 border-b border-black bg-[#232323] px-[7px]"><div className="h-full bg-[#13c31c]" /></div>
        <div className="h-[17px] shrink-0 border-b border-black bg-[#494949] px-[7px]">
          <div className="h-full border-t border-[#b9c0ec] bg-linear-to-b from-[#7280d8] to-[#4c61cb]" />
        </div>
        <div className="flex-1 bg-[#262626] pr-[7px]">
          <div className="h-full bg-[#323232] pl-1">
            {[0, 1, 2].map((row) => (
              <div key={row} className="flex h-[17px] items-center border-b border-[#282828] text-[#b8b8b8]"><IBeam /></div>
            ))}
          </div>
        </div>
        {/* playhead */}
        <div className="absolute top-[15px] bottom-0 left-px flex w-[13px] flex-col items-center text-[#2d8ceb]">
          <Icon w={13} h={14}><path {...solid} d="M0.500 0.500H12.500V6L6.500 14 0.500 6Z" /></Icon>
          <div className="w-px flex-1 bg-[#2d8ceb]" />
        </div>
      </div>
      <div className="flex w-3.5 shrink-0 flex-col items-end pt-8 text-[#b0b0b0]">
        <Icon w={11} h={14}><path {...solid} d="M0 0H11V9.500L5.500 14 0 9.500Z" /></Icon>
        <Icon w={14} h={16} className="mt-1"><path d="M0.500 9 6.500 3.500V9.500Z" /><path {...solid} d="M6 6H14V12H8Z" /><circle cx="6" cy="11.500" r="3" fill="#232323" /></Icon>
      </div>
    </div>
  );
}

function Timeline() {
  return (
    <section className="ml-px flex min-h-0 flex-1 flex-col bg-[#232323]">
      <div className="flex h-7 shrink-0 items-center pl-2.5 text-[11px] text-[#b4b4b4]">
        <button aria-label="Close"><CloseX /></button>
        <div className="ml-[9px] h-2.5 w-2.5 bg-[#a9966f]" />
        <span className="mr-[5px] ml-3">Comp 1</span>
        <MenuLines />
      </div>
      <div className="flex min-h-0 flex-1">
        <LayerColumn />
        <TimeRuler />
      </div>
      <footer className="flex h-[13px] shrink-0 items-start text-[#b0b0b0]">
        <div className="flex h-full w-[533px] shrink-0 items-start overflow-hidden border-t border-black pl-1">
          <button aria-label="Layer switches" className="bg-[#1b1b1b] p-0.5 text-[#2d8ceb]">
            <Icon w={12} h={12}><path d="M1 8V1H8M3 10V3.500H10M5 5.500H11.500V12H5ZM8.300 7V11M6.300 9H10.300" strokeWidth={1.200} /></Icon>
          </button>
          <button aria-label="Transfer controls" className="ml-1 pt-0.5">
            <Icon w={12} h={12}><circle cx="4.500" cy="4.500" r="3.700" /><path d="M6 5H11V12H6Z" /></Icon>
          </button>
          <button aria-label="In and out" className="ml-1.5 pt-0.5">
            <Icon w={13} h={12}><path d="M4 1Q2.500 1 2.500 3.500T0.500 6Q2.500 6 2.500 9T4 12M9 1Q10.500 1 10.500 3.500T12.500 6Q10.500 6 10.500 9T9 12" /><rect x="4" y="0" width="5" height="12" fill="#777" stroke="none" /></Icon>
          </button>
          <button className="ml-auto h-3 w-[134px] rounded-t-sm border border-b-0 border-[#383838] text-[11px] leading-[11px] whitespace-nowrap text-[#8f8f8f]">Toggle Switches / Modes</button>
          <div className="w-[133px]" />
        </div>
        <div className="flex h-full w-[108px] items-start border-t border-black pt-[3px]">
          <Icon w={10} h={6} className="mt-px ml-[5px]"><path {...solid} d="M0 5 3 2 4.500 3 6 1 10 5Z" /></Icon>
          <input
            type="range"
            aria-label="Zoom timeline"
            defaultValue={0}
            className="ml-3 h-2.5 w-12 appearance-none bg-transparent [&::-webkit-slider-runnable-track]:h-[3px] [&::-webkit-slider-runnable-track]:bg-[#404040] [&::-webkit-slider-thumb]:-mt-1 [&::-webkit-slider-thumb]:h-2.5 [&::-webkit-slider-thumb]:w-2.5 [&::-webkit-slider-thumb]:appearance-none [&::-webkit-slider-thumb]:rounded-full [&::-webkit-slider-thumb]:border-2 [&::-webkit-slider-thumb]:border-[#8f8f8f] [&::-webkit-slider-thumb]:bg-[#232323]"
          />
          <Icon w={17} h={8} className="ml-3"><path {...solid} d="M0 7 5 2H6.500L3 7ZM4 7 11 0 17 7Z" /></Icon>
        </div>
      </footer>
    </section>
  );
}

function App() {
  return (
    <div className="relative flex h-screen w-full flex-col overflow-hidden bg-[#161616] font-['Open_Sans','Noto_Sans',sans-serif]">
      <MenuBar />
      <Toolbar />
      <main className="my-1 ml-px flex h-[418px] shrink-0 gap-1">
        <ProjectPanel />
        <Viewer />
        <SideColumn />
      </main>
      <Timeline />

      {/* highlight around the project panel */}
      <div className="pointer-events-none absolute top-[46px] left-0 h-40 w-[319px] border-4 border-[#fe0000]" />
      <div role="tooltip" className="absolute top-14 left-[190px] border border-[#767676] bg-white pr-1 pl-[5px] text-[12px] leading-[18px] text-[#575757] shadow-[2px_2px_2px_rgba(0,0,0,0.6)]">
        Rectangle Tool (Q)
      </div>
    </div>
  );
}

export default App;
